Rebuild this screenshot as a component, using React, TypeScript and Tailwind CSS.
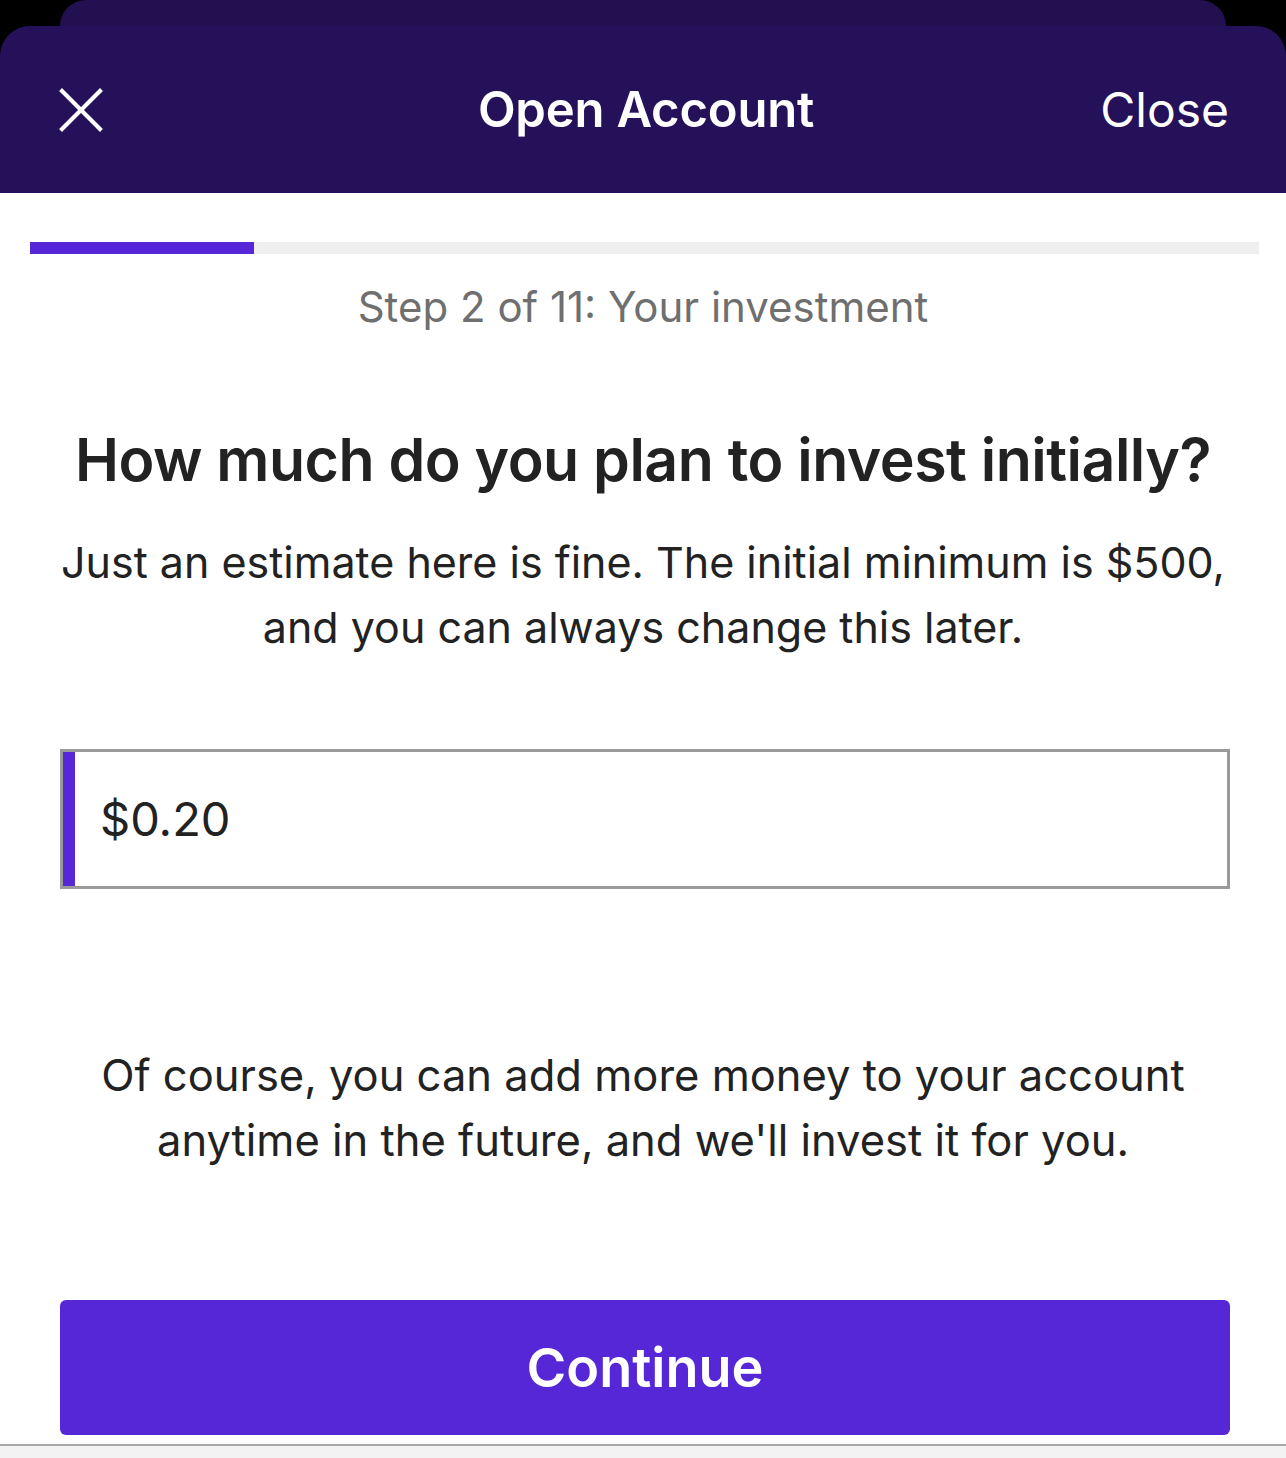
import { X } from 'lucide-react';

const font = "font-['Inter','Liberation_Sans',sans-serif]";

export default function App() {
  return (
    <div className={`w-[1286px] h-[1458px] bg-white flex flex-col overflow-hidden ${font}`}>
      {/* Stacked sheet header */}
      <div className="bg-black">
        <div className="h-[26px] px-[60px]">
          <div className="h-full rounded-t-[30px] bg-[#221050]" />
        </div>
        <div className="h-[167px] rounded-t-[30px] bg-[#25115a] grid grid-cols-[1fr_auto_1fr] items-center px-[43px]">
          <X size={76} strokeWidth={1.3} color="white" strokeLinecap="square" />
          <div className="text-white text-[49px] font-semibold tracking-[-0.2px] pl-[6px]">Open Account</div>
          <div className="text-white text-[48px] justify-self-end mr-[14px]">Close</div>
        </div>
      </div>

      {/* Progress */}
      <div className="mt-[49px] mx-[30px] mr-[27px] h-[12px] bg-[#f0f0f0] flex">
        <div className="w-[224px] h-full bg-[#5527d6]" />
      </div>

      <div className="mt-[28px] text-center text-[42px] text-[#6f6f6f] leading-[50px]">
        Step 2 of 11: Your investment
      </div>

      <h1 className="mt-[98px] text-center text-[59px] font-semibold text-[#222] leading-[60px] tracking-[-0.5px]">
        How much do you plan to invest initially?
      </h1>

      <p className="mt-[40px] text-center text-[43px] text-[#222] leading-[65px]">
        Just an estimate here is fine. The initial minimum is $500,
        <br />
        and you can always change this later.
      </p>

      {/* Amount input */}
      <div className="mt-[89px] mx-[60px] mr-[56px] h-[140px] border-[3px] border-[#9a9a9a] flex">
        <div className="w-[12px] h-full bg-[#5527d6]" />
        <div className="flex items-center pl-[25px] text-[47px] text-[#222]">$0.20</div>
      </div>

      <p className="mt-[154px] text-center text-[43.5px] text-[#222] leading-[65px]">
        Of course, you can add more money to your account
        <br />
        anytime in the future, and we'll invest it for you.
      </p>

      <button className="mt-[127px] mx-[60px] mr-[56px] h-[135px] rounded-[6px] bg-[#5527d6] text-white text-[54px] font-semibold">
        Continue
      </button>

      <div className="mt-[9px] border-t-[2px] border-[#a5a8a5] bg-[#f2f3f2] flex-1" />
    </div>
  );
}
